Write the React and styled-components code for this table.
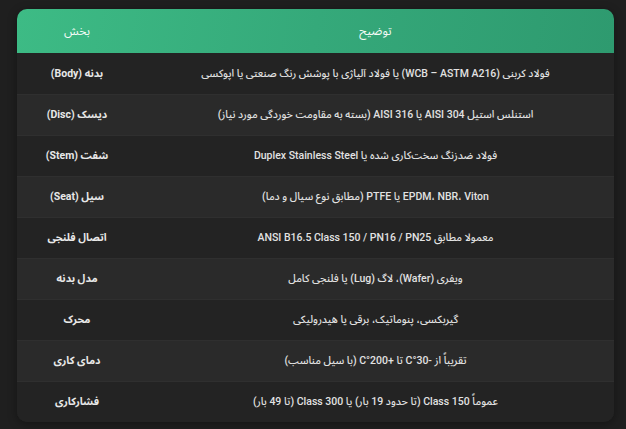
import styled, { createGlobalStyle } from "styled-components";

const GlobalStyle = createGlobalStyle`
  html, body {
    margin: 0;
    padding: 0;
    background: #1f1f1f;
  }
  body {
    font-family: Roboto, "Noto Sans Arabic", "Vazirmatn", "DejaVu Sans", sans-serif;
  }
`;

const Page = styled.div`
  padding: 9px 12px 9px 17px;
`;

const Table = styled.div`
  width: 597px;
  border-radius: 10px;
  overflow: hidden;
  background: #232323;
  box-shadow: 0 2px 10px rgba(0, 0, 0, 0.35);
`;

const Row = styled.div`
  display: grid;
  grid-template-columns: 120px 1fr;
  align-items: center;
  height: ${(p) => p.$height}px;
  background: ${(p) => p.$bg};
  border-top: ${(p) => (p.$divider ? "1px solid #2f2f2f" : "none")};
  box-sizing: border-box;
`;

const HeaderRow = styled(Row)`
  background: linear-gradient(100deg, #3dbb85 0%, #35a97a 50%, #2e9a6f 100%);
`;

const HeadCell = styled.div`
  direction: rtl;
  text-align: center;
  color: #f4fbf7;
  font-size: 12px;
`;

const PartCell = styled.div`
  direction: rtl;
  text-align: center;
  color: #e8e8e8;
  font-size: 10.5px;
  font-weight: 700;
`;

const DescCell = styled.div`
  direction: rtl;
  text-align: center;
  color: #e2e2e2;
  font-size: 10.5px;
  font-weight: 500;
`;

const rows = [
  ["بدنه (Body)", "فولاد کربنی (WCB – ASTM A216) یا فولاد آلیاژی با پوشش رنگ صنعتی یا اپوکسی"],
  ["دیسک (Disc)", "استنلس استیل AISI 304 یا AISI 316 (بسته به مقاومت خوردگی مورد نیاز)"],
  ["شفت (Stem)", "فولاد ضدزنگ سخت‌کاری شده یا Duplex Stainless Steel"],
  ["سیل (Seat)", "EPDM، NBR، Viton یا PTFE (مطابق نوع سیال و دما)"],
  ["اتصال فلنجی", "معمولا مطابق ANSI B16.5 Class 150 / PN16 / PN25"],
  ["مدل بدنه", "ویفری (Wafer)، لاگ (Lug) یا فلنجی کامل"],
  ["محرک", "گیربکسی، پنوماتیک، برقی یا هیدرولیکی"],
  ["دمای کاری", "تقریباً از -30°C تا +200°C (با سیل مناسب)"],
  ["فشارکاری", "عموماً Class 150 (تا حدود 19 بار) یا Class 300 (تا 49 بار)"],
];

export default function App() {
  return (
    <>
      <GlobalStyle />
      <Page>
        <Table>
          <HeaderRow $height={44}>
            <HeadCell>بخش</HeadCell>
            <HeadCell>توضیح</HeadCell>
          </HeaderRow>
          {rows.map(([part, desc], i) => (
            <Row
              key={part}
              $height={41}
              $divider={i > 0}
              $bg={i % 2 === 0 ? "#232323" : "#2a2a2a"}
            >
              <PartCell>{part}</PartCell>
              <DescCell>{desc}</DescCell>
            </Row>
          ))}
        </Table>
      </Page>
    </>
  );
}
